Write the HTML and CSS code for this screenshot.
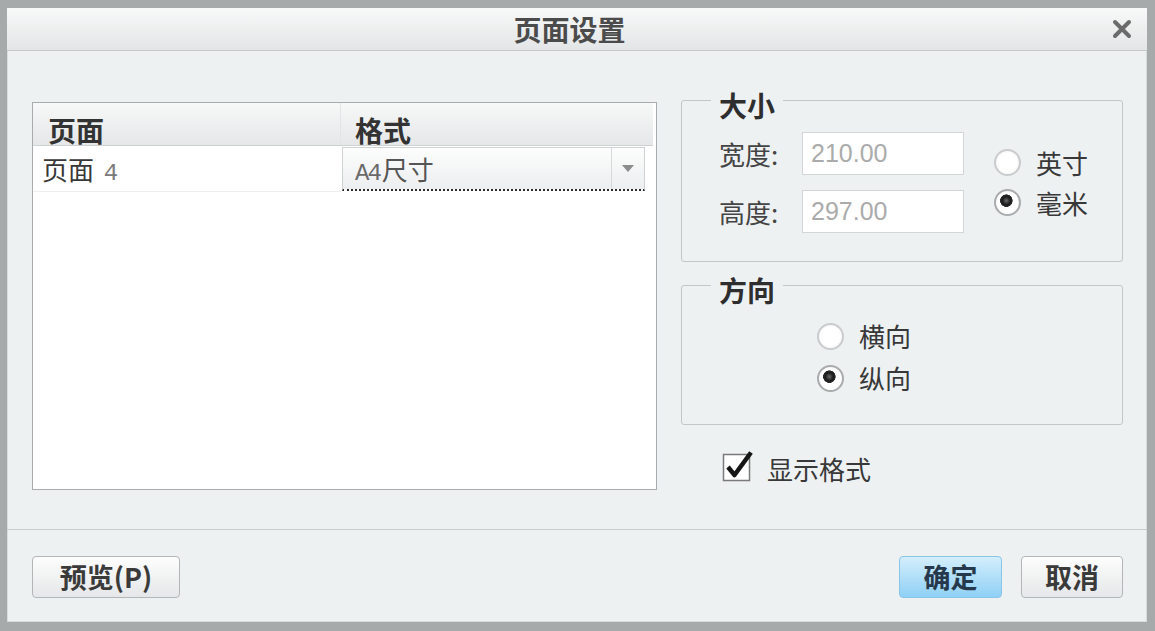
FILE: index.html
```html
<!DOCTYPE html>
<html lang="zh-CN">
<head>
    <meta charset="UTF-8">
    <meta name="viewport" content="width=device-width, initial-scale=1.0">
    <title>页面设置</title>
    <link rel="stylesheet" href="styles.css">
</head>
<body>

    <div class="dialog">
        <header class="titlebar">
            <span class="title">页面设置</span>
            <svg class="close" width="20" height="20" viewBox="0 0 20 20">
                <path d="M3 3 L17 17 M17 3 L3 17" stroke="#6b6b6b" stroke-width="4" stroke-linecap="round"/>
            </svg>
        </header>

        <main class="content">
            <!-- Sheet list -->
            <div class="sheet-list">
                <div class="list-head">
                    <div class="col-page">页面</div>
                    <div class="col-format">格式</div>
                </div>
                <div class="list-row">
                    <div class="col-page">页面 <span class="num">4</span></div>
                    <div class="col-format">
                        <div class="combo">
                            <span class="combo-text"><span class="num">A4</span>尺寸</span>
                            <span class="combo-btn">
                                <svg width="12" height="7" viewBox="0 0 12 7"><path d="M0 0 H12 L6 7 Z" fill="#8c8c8c"/></svg>
                            </span>
                        </div>
                    </div>
                </div>
            </div>

            <!-- Options -->
            <div class="options">
                <fieldset class="group size-group">
                    <legend>大小</legend>
                    <div class="size-body">
                        <div class="fields">
                            <label class="field-label">宽度:</label>
                            <input class="field-box" type="text" value="210.00" readonly>
                            <label class="field-label">高度:</label>
                            <input class="field-box" type="text" value="297.00" readonly>
                        </div>
                        <div class="units">
                            <div class="radio"><span class="dot"></span>英寸</div>
                            <div class="radio on"><span class="dot"></span>毫米</div>
                        </div>
                    </div>
                </fieldset>

                <fieldset class="group dir-group">
                    <legend>方向</legend>
                    <div class="dir-body">
                        <div class="radio"><span class="dot"></span>横向</div>
                        <div class="radio on"><span class="dot"></span>纵向</div>
                    </div>
                </fieldset>

                <div class="check-row">
                    <svg class="check" width="32" height="32" viewBox="0 0 32 32">
                        <rect x="1.5" y="4.5" width="26" height="26" fill="#fff" stroke="#7a7a7a" stroke-width="1.5"/>
                        <path d="M6 17 L12.5 25 L29 2.5" fill="none" stroke="#151515" stroke-width="4.5" stroke-linejoin="round"/>
                    </svg>
                    <span>显示格式</span>
                </div>
            </div>
        </main>

        <footer class="footer">
            <button class="btn btn-preview">预览(P)</button>
            <button class="btn btn-ok">确定</button>
            <button class="btn btn-cancel">取消</button>
        </footer>
    </div>

</body>
</html>
```

FILE: styles.css
```css
* {
    margin: 0;
    padding: 0;
    box-sizing: border-box;
}

html, body {
    height: 100%;
}

body {
    font-family: "Noto Sans CJK SC", sans-serif;
    font-size: 26px;
    line-height: 30px;
    color: #383838;
    background: #a7aaab;
}

.dialog {
    height: 100vh;
    display: flex;
    flex-direction: column;
    border-style: solid;
    border-color: #a7aaab;
    border-width: 8px 8px 9px 7px;
    background: #eef1f2;
    box-shadow: inset 0 0 0 1px #d9dcdd;
}

/* Title bar */

.titlebar {
    flex: none;
    height: 43px;
    display: grid;
    grid-template-columns: 1fr auto 1fr;
    align-items: center;
    padding-right: 15px;
    background: linear-gradient(#f8f9f9, #e3e5e6);
    border-bottom: 1px solid #c6c9ca;
}

.titlebar .title {
    grid-column: 2;
    font-size: 28px;
    font-weight: bold;
    color: #4b4b4b;
}

.titlebar .close {
    grid-column: 3;
    justify-self: end;
}

/* Content */

.content {
    flex: 1;
    display: flex;
    align-items: flex-start;
    gap: 24px;
    padding: 29px 24px 0 25px;
}

.sheet-list {
    flex: none;
    width: 625px;
    height: 388px;
    margin-top: 22px;
    padding-right: 3px;
    background: #fff;
    border: 1px solid #a9acae;
}

.list-head {
    display: flex;
    height: 43px;
    background: linear-gradient(#f7f8f8, #e5e7e8);
    border-bottom: 1px solid #cfd2d3;
    font-size: 28px;
    font-weight: bold;
    color: #333;
}

.list-head .col-page,
.list-head .col-format {
    display: flex;
    align-items: flex-end;
}

.list-head .col-page {
    width: 308px;
    padding-left: 15px;
    border-right: 1px solid #e2e4e5;
}

.list-head .col-format {
    flex: 1;
    padding-left: 14px;
}

.list-row {
    display: flex;
    height: 46px;
}

.list-row .col-page {
    width: 308px;
    padding-left: 9px;
    line-height: 45px;
    border-bottom: 1px solid #eef0f0;
}

.num {
    font-family: "Liberation Mono", monospace;
    font-size: 24px;
    color: #7a7a7a;
}

.list-row .col-page .num {
    margin-left: 4px;
}

.list-row .col-format {
    flex: 1;
    padding: 1px 8px 0 1px;
}

.combo {
    display: flex;
    height: 44px;
    border: 1px solid #d0d3d4;
    border-bottom: 2px dotted #2a2a2a;
    background: linear-gradient(#fdfdfd, #eceeef);
}

.combo-text {
    flex: 1;
    padding-left: 12px;
    line-height: 41px;
    color: #555;
}

.combo-text .num {
    color: #6a6a6a;
    letter-spacing: -2px;
    margin-right: 2px;
}

.combo-btn {
    width: 33px;
    display: flex;
    align-items: center;
    justify-content: center;
    border-left: 1px solid #d6d8d9;
}

/* Options */

.options {
    flex: 1;
    display: flex;
    flex-direction: column;
}

.group {
    border: 1px solid #c3c6c7;
    border-radius: 3px;
    padding-left: 37px;
}

.group legend {
    margin-left: -8px;
    padding: 10px 8px 0;
    font-size: 28px;
    font-weight: bold;
    color: #2e2e2e;
}

.size-group {
    padding-top: 12px;
    padding-bottom: 28px;
}

.size-body {
    display: flex;
    align-items: center;
}

.fields {
    display: grid;
    grid-template-columns: 83px 162px;
    row-gap: 15px;
    align-items: center;
}

.field-label {
    color: #444;
}

.field-box {
    height: 43px;
    padding-left: 8px;
    background: #fff;
    border: 1px solid #d3d6d7;
    font-family: "Liberation Sans", sans-serif;
    font-size: 25px;
    color: #ababab;
    outline: none;
}

.units {
    margin-left: 30px;
    display: flex;
    flex-direction: column;
}

.radio {
    display: flex;
    align-items: center;
    gap: 15px;
    height: 40px;
}

.radio .dot {
    width: 27px;
    height: 27px;
    border-radius: 50%;
    border: 2px solid #c9cbcc;
    background: radial-gradient(#fff 55%, #ececec);
}

.radio.on .dot {
    border-color: #a9abac;
    background:
        radial-gradient(circle at 45% 42%, #6a6a6a 0, #1c1c1c 4px, #2a2a2a 6px, transparent 6.5px),
        radial-gradient(#fff 60%, #e6e6e6);
}

.dir-group {
    margin-top: 3px;
    padding-top: 11px;
    padding-bottom: 26px;
}

.dir-body {
    display: flex;
    flex-direction: column;
    gap: 2px;
    padding-left: 98px;
}

.check-row {
    display: flex;
    align-items: center;
    gap: 13px;
    height: 30px;
    margin-top: 29px;
    padding-left: 41px;
}

.check {
    margin-top: -6px;
}

/* Footer */

.footer {
    flex: none;
    height: 93px;
    display: flex;
    align-items: flex-start;
    gap: 19px;
    padding: 26px 24px 0 25px;
    border-top: 1px solid #c9cccd;
}

.btn {
    height: 42px;
    border: 1px solid #b3b6b8;
    border-radius: 4px;
    background: linear-gradient(#fdfdfd, #e5e7e8);
    font-family: inherit;
    font-size: 27px;
    font-weight: bold;
    line-height: 30px;
    color: #3a3a3a;
    cursor: pointer;
}

.btn-preview {
    width: 148px;
    margin-right: auto;
}

.btn-ok {
    width: 103px;
    background: linear-gradient(#d4eefc, #8fd0f6);
    border-color: #8ac5e9;
    color: #26394c;
}

.btn-cancel {
    width: 102px;
}
```
